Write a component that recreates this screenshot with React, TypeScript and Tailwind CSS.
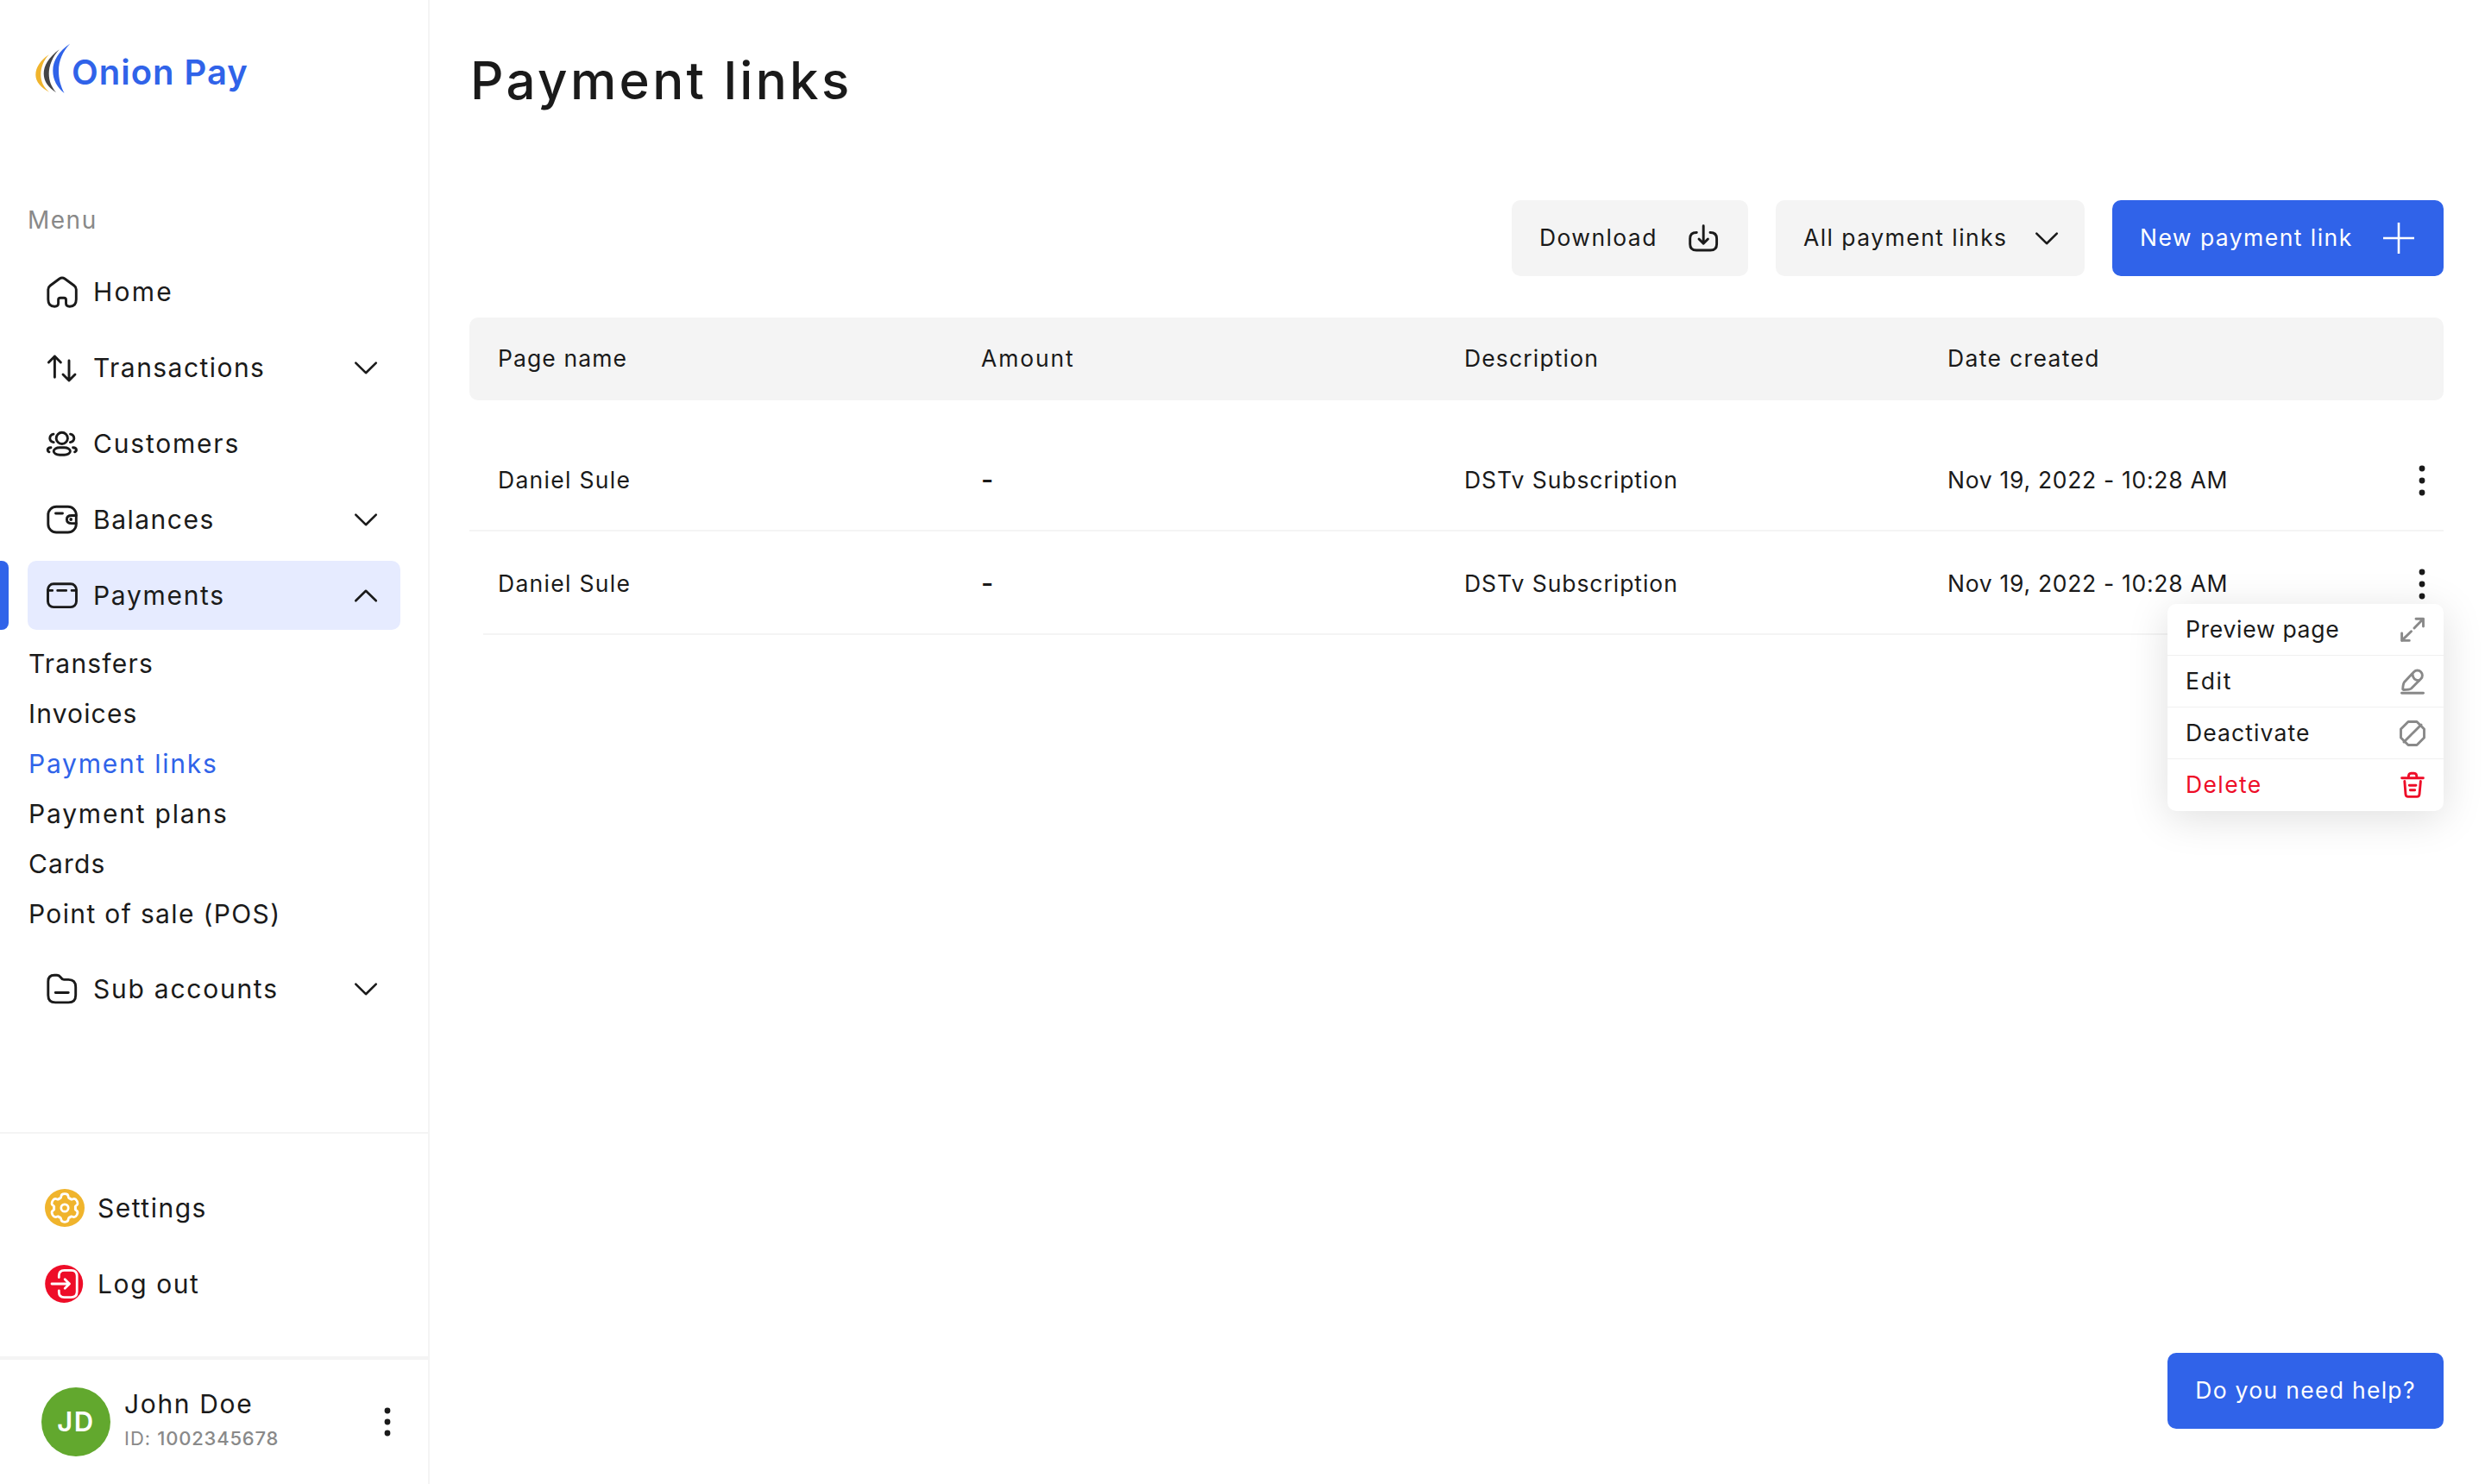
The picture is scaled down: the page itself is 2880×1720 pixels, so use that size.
import React from 'react';
import clsx from 'clsx';

const navTop = [
  { label: 'Home', icon: <HomeIcon />, tracking: 'tracking-[2.2px]' },
  { label: 'Transactions', icon: <TransactionsIcon />, tracking: 'tracking-[1.45px]', arrow: 'down' },
  { label: 'Customers', icon: <CustomersIcon />, tracking: 'tracking-[1.8px]' },
  { label: 'Balances', icon: <BalancesIcon />, tracking: 'tracking-[1.5px]', arrow: 'down' },
  { label: 'Payments', icon: <PaymentsIcon />, tracking: 'tracking-[1.7px]', arrow: 'up', active: true },
];

const paymentsMenu = [
  { label: 'Transfers', tracking: 'tracking-[1.2px]' },
  { label: 'Invoices', tracking: 'tracking-[1.15px]' },
  { label: 'Payment links', tracking: 'tracking-[1.75px]', active: true },
  { label: 'Payment plans', tracking: 'tracking-[1.8px]' },
  { label: 'Cards', tracking: 'tracking-[1.15px]' },
  { label: 'Point of sale (POS)', tracking: 'tracking-[1.35px]' },
];

const columns = [
  { label: 'Page name', tracking: 'tracking-[1.1px]' },
  { label: 'Amount', tracking: 'tracking-[1.85px]' },
  { label: 'Description', tracking: 'tracking-[1.15px]' },
  { label: 'Date created', tracking: 'tracking-[1.35px]' },
];

const links = [
  { name: 'Daniel Sule', amount: '-', description: 'DSTv Subscription', date: 'Nov 19, 2022 - 10:28 AM' },
  { name: 'Daniel Sule', amount: '-', description: 'DSTv Subscription', date: 'Nov 19, 2022 - 10:28 AM', open: true },
];

export default function App() {
  return (
    <div className="flex w-[2880px] h-[1720px] bg-white text-[#1a1a1a] font-['Inter',sans-serif] overflow-hidden">
      <Sidebar />
      <main className="flex-1 flex flex-col pl-[46px] pr-12 pt-[61px] pb-16">
        <h1 className="pl-px text-[60px] leading-[64px] font-medium tracking-[3.35px]">Payment links</h1>

        {/* Toolbar */}
        <div className="mt-[107px] flex justify-end gap-8 text-[26.5px]">
          <button className="h-[88px] w-[274px] rounded-[10px] bg-[#f4f4f4] pl-8 pr-8 flex items-center justify-between">
            <span className="tracking-[1.4px]">Download</span>
            <DownloadIcon />
          </button>
          <button className="h-[88px] w-[358px] rounded-[10px] bg-[#f4f4f4] pl-8 pr-6 flex items-center justify-between">
            <span className="tracking-[1.45px]">All payment links</span>
            <Chevron />
          </button>
          <button className="h-[88px] w-[384px] rounded-[10px] bg-[#3063e9] text-white pl-8 pr-8 flex items-center justify-between">
            <span className="tracking-[1.45px]">New payment link</span>
            <svg width="40" height="40" fill="none" stroke="currentColor" strokeWidth="2.6">
              <path d="M20 2V38M2 20H38" />
            </svg>
          </button>
        </div>

        {/* Table */}
        <div className="mt-12 text-[26.5px]">
          <div className="grid grid-cols-[560px_560px_560px_1fr] items-center h-24 pl-[33px] rounded-[10px] bg-[#f4f4f4]">
            {columns.map((col) => (
              <span key={col.label} className={col.tracking}>{col.label}</span>
            ))}
          </div>
          <div className="mt-8">
            {links.map((link, i) => (
              <div key={i} className="relative">
                <div className="grid grid-cols-[560px_560px_560px_1fr_40px] items-center h-[118px] pl-[33px] pr-[5px] pt-[3px]">
                  <span className="tracking-[1.3px]">{link.name}</span>
                  <span className="text-[31px] font-medium">{link.amount}</span>
                  <span className="tracking-[0.95px]">{link.description}</span>
                  <span className="tracking-[0.7px]">{link.date}</span>
                  <Dots gap={14} />
                </div>
                <div className={clsx('h-0.5 bg-[#f4f4f4]', i === links.length - 1 && 'ml-4')} />
                {link.open && <RowMenu />}
              </div>
            ))}
          </div>
        </div>

        <button className="mt-auto self-end h-[88px] w-[320px] rounded-[10px] bg-[#3063e9] text-white text-[26.5px] tracking-[1.3px]">
          Do you need help?
        </button>
      </main>
    </div>
  );
}

function Sidebar() {
  return (
    <aside className="w-[498px] shrink-0 border-r-2 border-[#f4f4f4] flex flex-col text-[30px]">
      <div className="pt-[50px] pl-[41px] flex items-start">
        <svg width="42" height="60" viewBox="0 0 42 60">
          <path d="M15.7 13.3C6 20 .3 28 .3 36.8C.3 45 7 52 16 56.8C9.5 51 6.3 44.5 6.3 36.5C6.3 28 9.5 20 15.7 13.3Z" fill="#f0b42c" />
          <path d="M27.7 7.3C15 17 9.7 26 9.7 35.6C9.7 44.5 15.5 52 24 57.3C18.5 50.5 15.7 44 15.7 35.6C15.7 26 20 15.5 27.7 7.3Z" fill="#444446" />
          <path d="M40.3 .5C27 9.5 20.3 20 20.3 32C20.3 43 25.5 51.5 33.5 58C29 49 27 41.5 27 32C27 20.5 31.5 10 40.3 .5Z" fill="#3063e9" />
        </svg>
        <span className="mt-[11px] text-[40px] leading-[46px] font-semibold tracking-[1px] text-[#3063e9]">Onion Pay</span>
      </div>

      <div className="mt-[129px] pl-8 text-[28px] leading-8 tracking-[1.5px] text-[#898989]">Menu</div>

      <nav className="mt-[27px] flex flex-col">
        <div className="flex flex-col gap-2">
          {navTop.map((item) => (
            <NavItem key={item.label} {...item} />
          ))}
        </div>
        <ul className="mt-[10px] pl-[33px]">
          {paymentsMenu.map((item) => (
            <li key={item.label} className={clsx('h-[58px] leading-[58px]', item.tracking, item.active && 'text-[#3063e9]')}>
              {item.label}
            </li>
          ))}
        </ul>
        <div className="mt-[18px]">
          <NavItem label="Sub accounts" icon={<FolderIcon />} tracking="tracking-[1.75px]" arrow="down" />
        </div>
      </nav>

      <div className="mt-auto h-[260px] border-t-2 border-[#f4f4f4] pt-[46px] pl-[52px] flex flex-col gap-2">
        <div className="h-20 flex items-center gap-[15px]">
          <SettingsIcon />
          <span className="tracking-[1.5px]">Settings</span>
        </div>
        <div className="h-20 flex items-center gap-[15px]">
          <LogoutIcon />
          <span className="tracking-[1.6px]">Log out</span>
        </div>
      </div>

      <div className="h-[148px] border-t-4 border-[#f4f4f4] flex pt-8 pl-12">
        <div className="w-20 h-20 rounded-full bg-[#62a82e] text-white text-[31px] font-semibold tracking-[1.5px] flex items-center justify-center">
          JD
        </div>
        <div className="ml-4 w-[285px]">
          <div className="leading-[38px] tracking-[1.65px]">John Doe</div>
          <div className="mt-[5px] text-[22px] leading-8 text-[#898989]">
            <span className="tracking-[1px]">ID: </span>
            <span className="font-medium tracking-[0.8px]">1002345678</span>
          </div>
        </div>
        <div className="mt-5">
          <Dots gap={13} />
        </div>
      </div>
    </aside>
  );
}

function NavItem({ label, icon, tracking, arrow, active }: any) {
  return (
    <div className={clsx('relative mx-8 h-20 px-5 rounded-[10px] flex items-center', active && 'bg-[#e6ebff]')}>
      {active && <div className="absolute -left-8 top-0 w-2.5 h-20 rounded-r-[8px] bg-[#3063e9]" />}
      {icon}
      <span className={clsx('ml-4 flex-1 whitespace-nowrap', tracking)}>{label}</span>
      {arrow && <Chevron up={arrow === 'up'} />}
    </div>
  );
}

function RowMenu() {
  return (
    <div className="absolute right-0 top-[84px] z-10 w-[320px] h-[240px] rounded-[10px] bg-white shadow-[0_8px_48px_rgba(0,0,0,0.13)]">
      <MenuItem label="Preview page" tracking="tracking-[0.7px]">
        <path d="M20 3.3H28.5V12M28.5 3.3L18 14M14.5 17.7L3.6 28.4M3.6 20V28.4H12.3" />
      </MenuItem>
      <MenuItem label="Edit" tracking="tracking-[1.7px]">
        <path d="M3.5 29.3H28.5" />
        <path d="M17.6 4.7A5.7 5.7 0 0 1 25.7 12.8L14.5 24Q12.8 25.5 5.6 25.5Q4.6 25.5 4.8 24Q5 18.4 6.8 16.2Z" />
        <path d="M16 7.5Q16.6 14.6 23.8 14.8" />
      </MenuItem>
      <MenuItem label="Deactivate" tracking="tracking-[1.1px]">
        <path d="M11 2.5H21L29.5 11V21L21 29.5H11L2.5 21V11Z" />
        <path d="M6 26L26 6" />
      </MenuItem>
      <MenuItem label="Delete" tracking="tracking-[1.4px]" danger>
        <path d="M3.6 7.8H28.4M11.3 7.2Q11.3 2.3 14.3 2.3H17.9Q20.9 2.3 20.9 7.2" />
        <path d="M6.8 11.5L8 26.5Q8.2 29.4 11 29.4H21Q23.8 29.4 24 26.5L25.4 11.5" />
        <path d="M12.3 16.3H20M13.3 21.7H18.7" />
      </MenuItem>
    </div>
  );
}

function MenuItem({ label, tracking, danger, children }: any) {
  return (
    <div className="h-[60px] pl-[21px] pr-5 flex items-center justify-between border-b border-[#f0f0f0] last:border-b-0">
      <span className={clsx(tracking, danger && 'text-[#ee0d28]')}>{label}</span>
      <svg
        width="32"
        height="32"
        fill="none"
        strokeWidth="2.9"
        strokeLinecap="round"
        strokeLinejoin="round"
        className={danger ? 'stroke-[#ee0d28]' : 'stroke-[#898989]'}
      >
        {children}
      </svg>
    </div>
  );
}

function Icon({ children }: any) {
  return (
    <svg width="40" height="40" fill="none" stroke="currentColor" strokeWidth="2.9" strokeLinecap="round" strokeLinejoin="round" className="shrink-0">
      {children}
    </svg>
  );
}

function Chevron({ up }: { up?: boolean }) {
  return (
    <Icon>
      <path d={up ? 'M8.3 26.3L20 14.8L31.8 26.3' : 'M8.3 14.6L20 26.2L31.8 14.6'} strokeWidth="2.6" />
    </Icon>
  );
}

function Dots({ gap }: { gap: number }) {
  return (
    <svg width="40" height="40" fill="currentColor">
      <circle cx="20" cy={20 - gap} r="3.4" />
      <circle cx="20" cy="20" r="3.4" />
      <circle cx="20" cy={20 + gap} r="3.4" />
    </svg>
  );
}

function HomeIcon() {
  return (
    <Icon>
      <path d="M17 5L6.2 13Q3.8 14.8 3.8 17.5V29Q3.8 37.2 11.3 37.2Q15.6 37.2 15.6 33.5V29.5Q15.6 27.2 18 27.2H22Q24.5 27.2 24.5 29.5V33.5Q24.5 37.2 28.8 37.2Q36.3 37.2 36.3 29V17.5Q36.3 14.8 33.9 13L23 5Q20 2.8 17 5Z" />
    </Icon>
  );
}

function TransactionsIcon() {
  return (
    <Icon>
      <path d="M11.4 7V31.3M4.4 14L11.4 7L18.4 14M28 12V35M21 28L28 35L35 28" />
    </Icon>
  );
}

function CustomersIcon() {
  return (
    <Icon>
      <circle cx="19.8" cy="13.9" r="6.6" />
      <rect x="10.2" y="24.8" width="19.2" height="8.4" rx="7" ry="4.2" />
      <path d="M10 9.2Q5.8 10.2 5.8 13.9Q5.8 17.8 10.2 18.6M29.6 9.2Q33.8 10.2 33.8 13.9Q33.8 17.8 29.4 18.6" />
      <path d="M7 24.8Q3.2 25 3.2 27.6Q3.2 29.2 5 29.8M32.6 24.8Q36.5 25 36.5 27.6Q36.5 29.2 34.6 29.8" />
    </Icon>
  );
}

function BalancesIcon() {
  return (
    <Icon>
      <rect x="3.8" y="5.3" width="32.5" height="29.7" rx="9.5" />
      <path d="M12.5 13H20.5" />
      <path d="M36.3 15.5H31Q25.4 15.5 25.4 20Q25.4 24.6 31 24.6H36.3" />
      <circle cx="30.2" cy="20" r="1.9" fill="currentColor" stroke="none" />
    </Icon>
  );
}

function PaymentsIcon() {
  return (
    <Icon>
      <rect x="3.5" y="6.8" width="33" height="26.8" rx="6.5" />
      <path d="M4 14.4H8.8M14.6 14.4H24.8M31 14.4H36" strokeWidth="2.6" />
    </Icon>
  );
}

function FolderIcon() {
  return (
    <Icon>
      <path d="M11 4.2H14Q16.6 4.2 18.2 6.6Q20 9.4 22 9.4H27.3Q35.7 9.4 35.7 18V27.5Q35.7 35.9 27.3 35.9H12.2Q3.8 35.9 3.8 27.5V11.5Q3.8 4.2 11 4.2Z" />
      <path d="M12.3 24.5H27.2" />
    </Icon>
  );
}

function DownloadIcon() {
  return (
    <Icon>
      <path d="M12.3 13.5Q4.7 13.5 4.7 20.5V27Q4.7 34 12 34H28.3Q35.6 34 35.6 27V20.5Q35.6 13.5 28 13.5" />
      <path d="M20.2 5.7V26.3M15 21L20.2 26.3L25.4 21" />
    </Icon>
  );
}

function SettingsIcon() {
  return (
    <svg width="46" height="44" viewBox="-23 -22 46 44" fill="none" stroke="white" strokeWidth="2.7" strokeLinecap="round">
      <ellipse rx="23" ry="22" fill="#f0b42c" stroke="none" />
      {[0, 60, 120, 180, 240, 300].map((deg) => (
        <path key={deg} transform={`rotate(${deg})`} d="M-6.3 -10.9Q-4.4 -10.6 -4.2 -13.2Q-4 -16.3 0 -16.3Q4 -16.3 4.2 -13.2Q4.4 -10.6 6.3 -10.9" />
      ))}
      <circle r="4.2" />
    </svg>
  );
}

function LogoutIcon() {
  return (
    <svg width="46" height="44" fill="none" stroke="white" strokeWidth="2.8" strokeLinecap="round" strokeLinejoin="round">
      <circle cx="22.2" cy="22" r="22" fill="#ee0d28" stroke="none" />
      <path d="M16.3 14.5V12.5Q16.3 6.4 22.5 6.4H30.5Q37.2 6.4 37.2 13V31Q37.2 37.6 30.5 37.6H22.5Q16.3 37.6 16.3 31.5V29.8" />
      <path d="M8 22H28.5M23.2 16.7L28.5 22L23.2 27.3" />
    </svg>
  );
}
